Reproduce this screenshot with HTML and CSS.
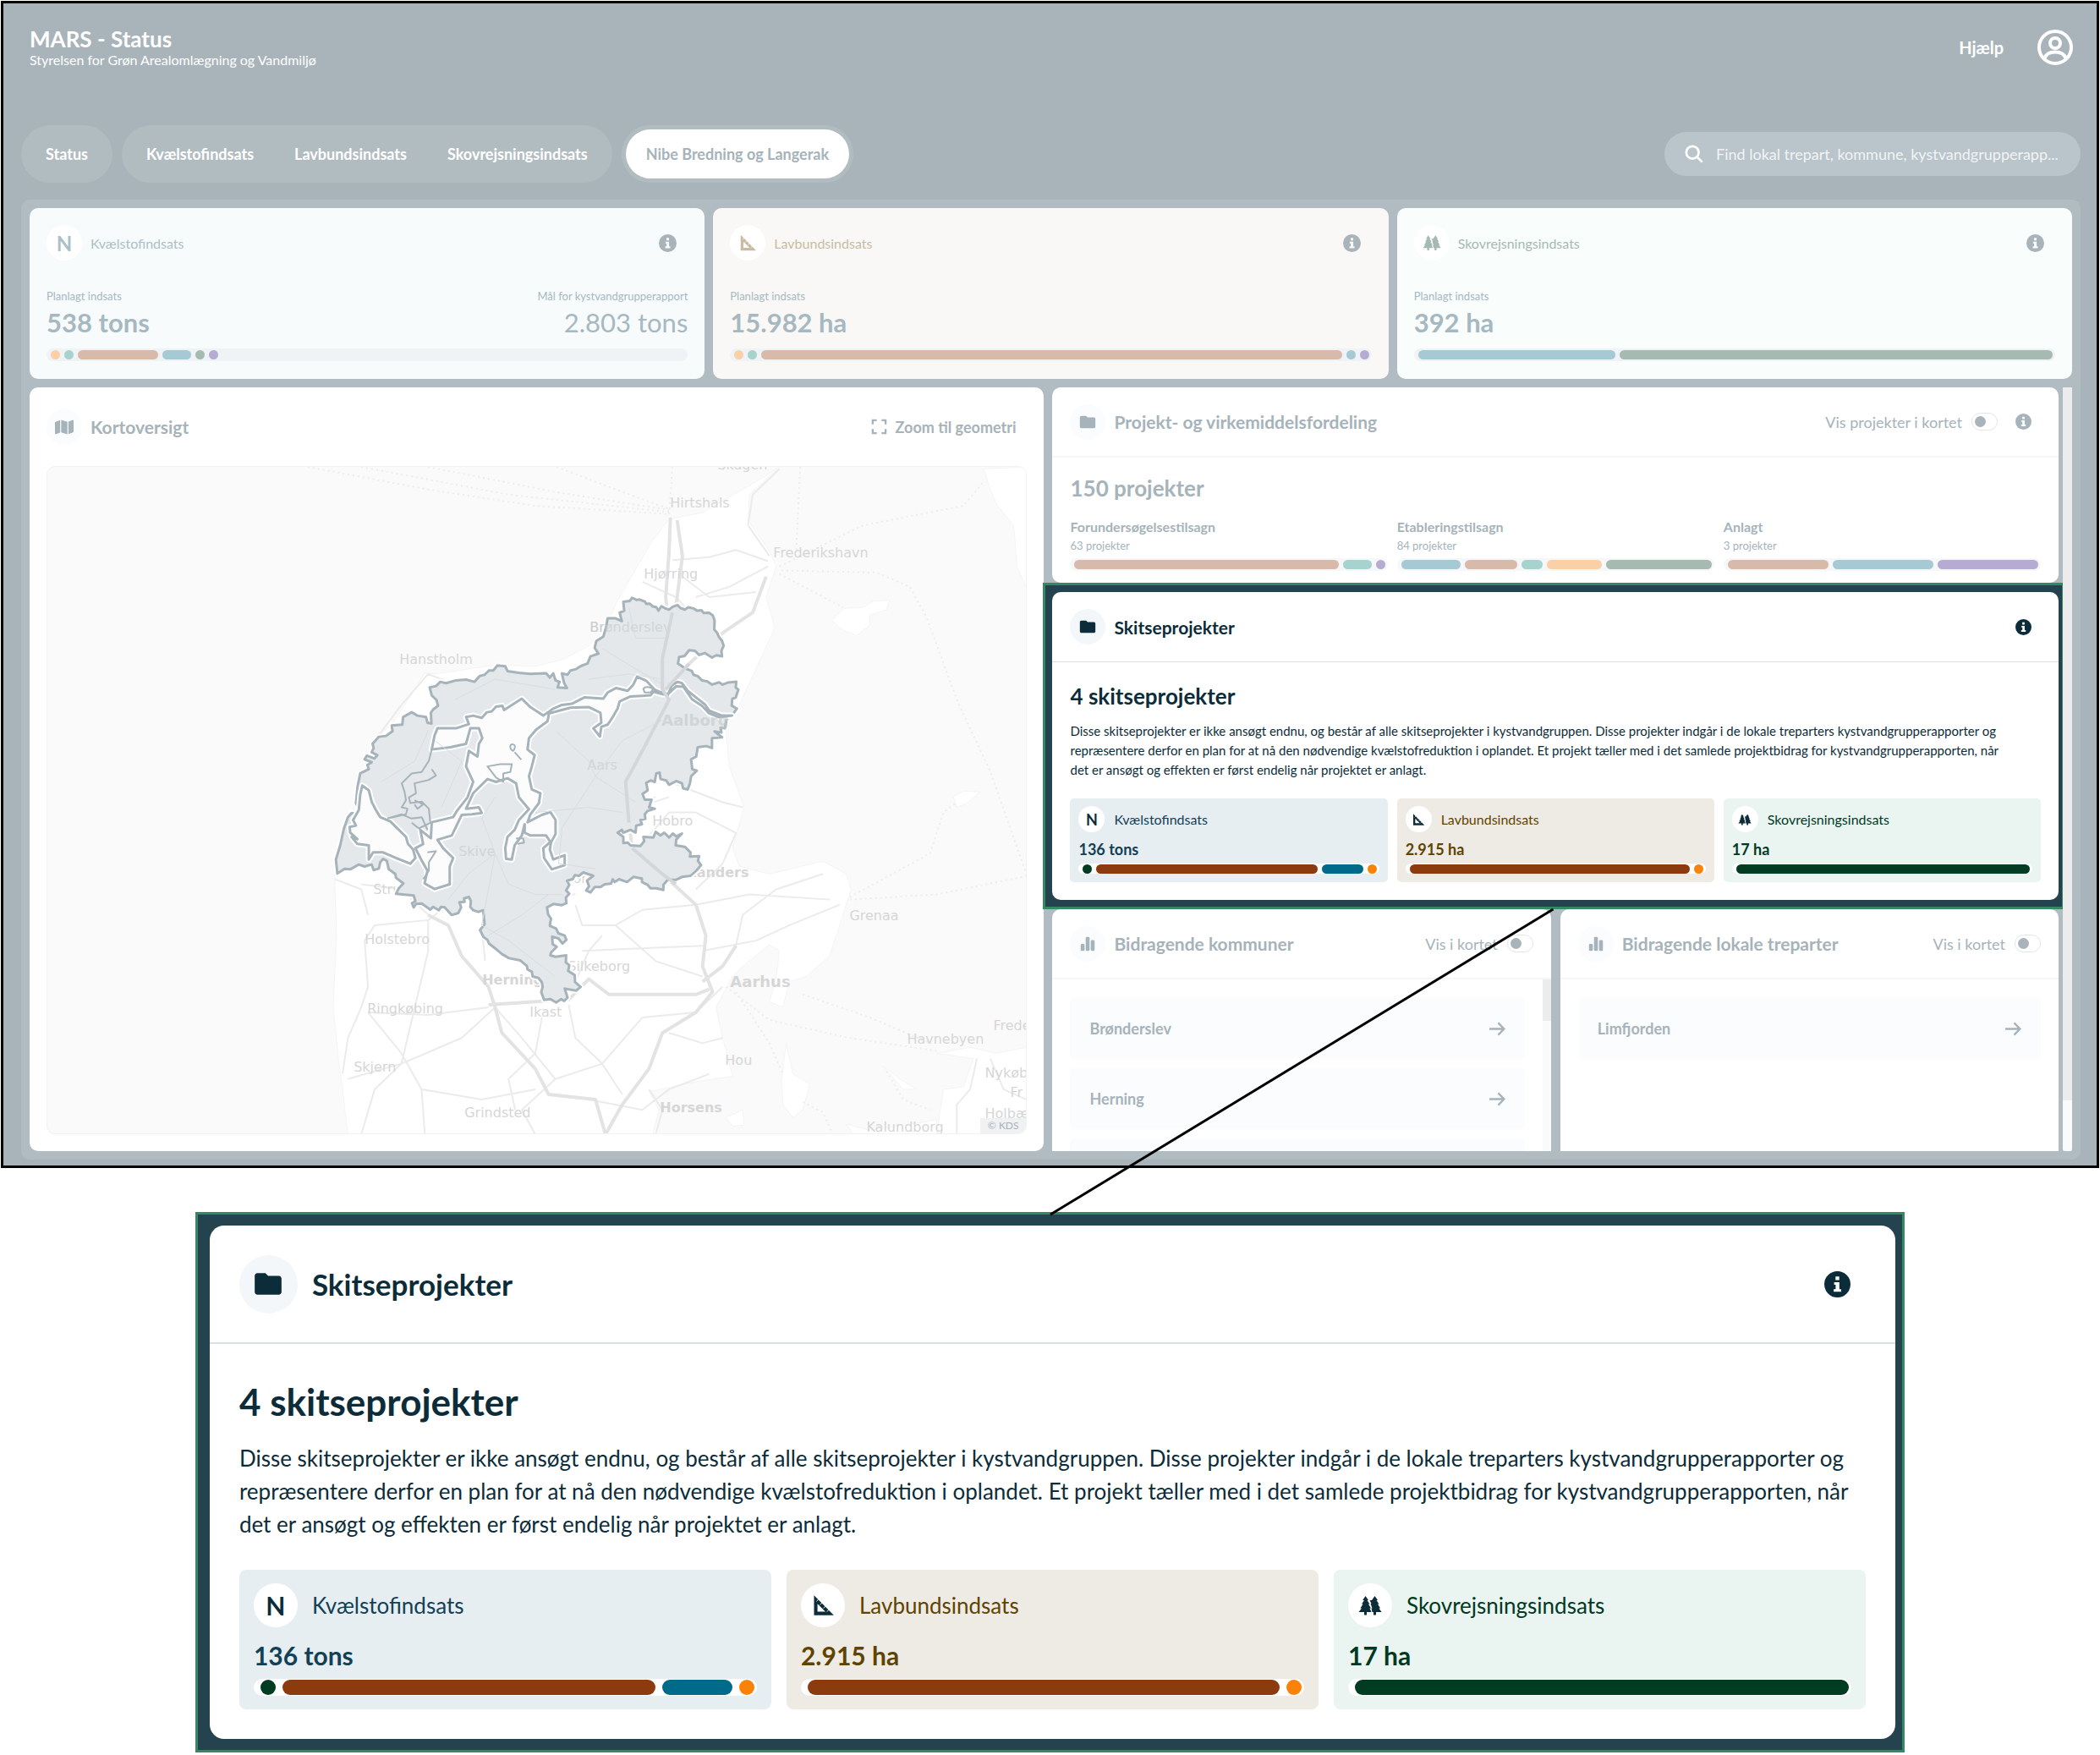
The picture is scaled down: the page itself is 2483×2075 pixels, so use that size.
FILE: index.html
```html
<!DOCTYPE html>
<html lang="da">
<head>
  <meta charset="UTF-8" />
  <meta name="viewport" content="width=device-width, initial-scale=1.0" />
  <title>MARS - Status</title>
  <link rel="stylesheet" href="styles.css">
</head>
<body>
  <!-- Icons -->
  <svg class="sprite" aria-hidden="true">
    <symbol id="i-info" viewBox="0 0 24 24"><path fill-rule="evenodd" d="M12 0a12 12 0 1 0 0 24 12 12 0 0 0 0-24zM10.3 4.8h3.4v3.4h-3.4zM9 10h4.8v6.4H15.4v2.4H8.6v-2.4h1.8v-4H9z"/></symbol>
    <symbol id="i-folder" viewBox="0 0 24 24"><path d="M10 4H4c-1.1 0-2 .9-2 2v12c0 1.1.9 2 2 2h16c1.100 0 2-.9 2-2V8c0-1.100-.9-2-2-2h-8l-2-2z"/></symbol>
    <symbol id="i-map" viewBox="0 0 576 512"><path d="M384 476L192 421V36l192 55zM416 475V88l127-51c16-6 33 5 33 22v336c0 10-6 18-15 22zM15 95l145-58v387L33 475c-16 6-33-6-33-23V117c0-10 6-18 15-22z"/></symbol>
    <symbol id="i-bars" viewBox="0 0 24 24"><rect x="3" y="12" width="5" height="9" rx="1.500"/><rect x="9.500" y="3" width="5" height="18" rx="1.500"/><rect x="16" y="7" width="5" height="14" rx="1.500"/></symbol>
    <symbol id="i-square" viewBox="0 0 24 24"><path fill-rule="evenodd" d="M3 2v20h20zM6.500 10.500l8 8h-8z"/><path fill="none" stroke="#fff" stroke-width=".8" d="M5.500 8l2-2M9 11.500l2-2M12.500 15l2-2M16 18.500l2-2"/></symbol>
    <symbol id="i-trees" viewBox="0 0 28 24"><path d="M8.500 1L12 6h-1.500l3 4.500H12l3 5h-1.500L15.500 20H10v3.500H7V20H.5L4 15.500H2.500l3-5H4L7 6H5.200z"/><path d="M19.500 1L23 6h-1.500l3 4.500H23l3 5h-1.500L27.500 20H21v3.500h-3V20h-1.500l-1-4.500h1L14.500 10h1L13.500 6H16z"/></symbol>
    <symbol id="i-user" viewBox="0 0 42 42"><g fill="none" stroke="currentColor" stroke-width="4"><circle cx="21" cy="21" r="19"/><circle cx="21" cy="16" r="6"/><path d="M8.500 34c1.500-5 6-7.500 12.500-7.500S32 29 33.500 34"/></g></symbol>
    <symbol id="i-search" viewBox="0 0 24 24"><g fill="none" stroke="currentColor" stroke-width="3"><circle cx="10" cy="10" r="8"/><path d="M15.500 15.500l7 7"/></g></symbol>
    <symbol id="i-arrow" viewBox="0 0 20 18"><path fill="none" stroke="currentColor" stroke-width="2.500" d="M0 9h18M11 1.500L18.300 9 11 16.500"/></symbol>
    <symbol id="i-expand" viewBox="0 0 20 20"><path fill="none" stroke="currentColor" stroke-width="2.500" d="M2 7V2h5M13 2h5v5M18 13v5h-5M7 18H2v-5"/></symbol>
  </svg>

  <div class="app">
    <header class="topbar">
      <div>
        <h1>MARS - Status</h1>
        <p>Styrelsen for Grøn Arealomlægning og Vandmiljø</p>
      </div>
      <div class="topbar-right">
        <a href="#" class="help">Hjælp</a>
        <button class="user" aria-label="Bruger"><svg><use href="#i-user"/></svg></button>
      </div>
    </header>

    <nav class="tabs">
      <div class="pill"><a href="#">Status</a></div>
      <div class="pill"><a href="#">Kvælstofindsats</a><a href="#">Lavbundsindsats</a><a href="#">Skovrejsningsindsats</a></div>
      <div class="pill"><a href="#" class="active">Nibe Bredning og Langerak</a></div>
      <label class="search">
        <svg><use href="#i-search"/></svg>
        <input type="text" aria-label="Søg" placeholder="Find lokal trepart, kommune, kystvandgrupperapp...">
      </label>
    </nav>

    <main class="dashboard">
      <!-- Key figures -->
      <div class="stats">
        <section class="stat kv">
          <div class="stat-head"><span class="circle">N</span><h2>Kvælstofindsats</h2><button class="info" aria-label="Info"><svg><use href="#i-info"/></svg></button></div>
          <div class="stat-values">
            <div><p>Planlagt indsats</p><strong>538 tons</strong></div>
            <div class="goal"><p>Mål for kystvandgrupperapport</p><span>2.803 tons</span></div>
          </div>
          <div class="track"><i class="dot orange"></i><i class="dot teal"></i><i class="brown" style="width:12.7%"></i><i class="blue" style="width:4.5%"></i><i class="dot green"></i><i class="dot purple"></i></div>
        </section>
        <section class="stat lav">
          <div class="stat-head"><span class="circle"><svg><use href="#i-square"/></svg></span><h2>Lavbundsindsats</h2><button class="info" aria-label="Info"><svg><use href="#i-info"/></svg></button></div>
          <div class="stat-values">
            <div><p>Planlagt indsats</p><strong>15.982 ha</strong></div>
          </div>
          <div class="track"><i class="dot orange"></i><i class="dot teal"></i><i class="brown" style="flex-grow:1"></i><i class="dot blue"></i><i class="dot purple"></i></div>
        </section>
        <section class="stat skov">
          <div class="stat-head"><span class="circle"><svg><use href="#i-trees"/></svg></span><h2>Skovrejsningsindsats</h2><button class="info" aria-label="Info"><svg><use href="#i-info"/></svg></button></div>
          <div class="stat-values">
            <div><p>Planlagt indsats</p><strong>392 ha</strong></div>
          </div>
          <div class="track"><i class="blue" style="flex-grow:233"></i><i class="green" style="flex-grow:511"></i></div>
        </section>
      </div>

      <div class="columns">
        <!-- Map -->
        <section class="map-card">
          <div class="map-head">
            <span class="circle"><svg><use href="#i-map"/></svg></span>
            <h2>Kortoversigt</h2>
            <button class="zoom"><svg><use href="#i-expand"/></svg>Zoom til geometri</button>
          </div>
          <div class="map">
            <svg viewBox="56 551 1157 791" preserveAspectRatio="xMidYMid slice" role="img" aria-label="Kort over Nordjylland">
              <g class="land" transform="translate(0 440) scale(.7908 .6059)">
                <path d="M1165 186L1130 215 1090 245 1050 275 1000 288 975 330 955 375 935 420 920 455 905 500 880 535 840 562 800 575 745 572 700 580 650 590 635 588 620 620 590 680 560 720 545 780 530 850 505 950 500 980 503 1100 498 1240 505 1330 512 1400 520 1490 975 1490 985 1440 970 1405 1040 1385 1095 1375 1080 1300 1070 1240 1095 1180 1110 1160 1150 1118 1165 1130 1160 1180 1150 1230 1170 1240 1180 1190 1205 1180 1240 1140 1255 1080 1272 1010 1265 980 1230 955 1150 980 1105 965 1095 930 1112 850 1090 770 1085 700 1105 650 1130 580 1158 500 1145 440 1160 380 1150 350 1118 290 1120 240z"/>
                <path d="M1243 485L1262 462 1290 460 1305 448 1330 446 1325 465 1300 475 1300 495 1280 515 1260 505zM1425 830L1440 818 1465 820 1445 842 1430 850zM1168 1385L1175 1310 1185 1370 1210 1390 1200 1440 1185 1455 1170 1430zM1320 1355L1345 1380 1370 1400 1350 1400zM1400 1488L1410 1400 1440 1395 1455 1340 1400 1330 1450 1318 1490 1330 1534 1318 1534 1488zM1265 1468L1300 1480 1400 1460 1400 1488 1275 1488zM1470 190L1534 186 1534 420 1520 380 1515 300 1490 260 1480 230zM1085 1455L1110 1440 1112 1470 1095 1472z"/>
              </g>
              <g class="ferries" transform="translate(0 440) scale(.7908 .6059)">
                <path d="M460 186L640 230 800 262 1000 278M540 186L760 240 1000 274M640 186L830 235 1000 270M832 186L920 230 1000 268M1005 186L1000 280M1196 186L1190 350M1165 380L1290 300 1440 262 1470 215M1168 388L1310 392 1360 420 1385 480 1430 640 1480 780 1534 980M1165 395L1260 460M1270 1030L1400 1020 1534 984M1270 1025L1390 940 1410 860 1430 840M1085 1200L1150 1265 1270 1300 1400 1325M1200 1215L1300 1260 1390 1310M1100 1210L1150 1310 1170 1370M1200 1425L1230 1445 1245 1488M1325 1365L1350 1420 1390 1440"/>
              </g>
              <g class="roads" transform="translate(0 440) scale(.7908 .6059)">
                <path d="M1165 190L1125 240 1118 300 1150 360M1005 368L1060 362 1100 348 1148 370M1148 380L1090 420 1040 440M1020 400L1060 440 1130 430M960 410L1010 440 1060 510M880 600L940 590 990 600M640 590L680 610 740 600 830 620M640 590L600 650 560 720M570 720L620 740 640 700 700 650 760 600M545 790L600 840 640 820M560 760L590 850 580 870M900 540L950 580 990 610M940 460L950 520 1000 520M830 700L880 760 890 790 840 890 835 960M890 790L950 840 980 830M890 790L930 720 990 680M860 690L900 690 960 740M800 860L880 850 930 860 1000 830M700 930L740 940 770 920M740 940L700 980 670 1040M740 940L760 1000 800 1020 860 1020M740 940L720 1080 725 1150M740 940L720 870 690 830M670 1040L640 1070 560 1080 545 1110 550 1200 540 1240M640 1060L600 1010 540 1000M500 990L540 1010 550 1060M550 1250L600 1330 630 1400 635 1488M550 1250L640 1255 730 1240M600 1350L690 1300 740 1240M600 1350L520 1380M600 1350L560 1400 540 1488M630 1400L720 1420 800 1400M640 1070L640 1130 620 1240 600 1350M740 1240L780 1300 830 1380 900 1350 960 1260M830 1380L780 1440 800 1488M850 1235L860 1300 900 1350 930 1410M860 1040L870 1080 920 1080 960 1050 1040 1040M920 1080L980 1150 1050 1180M870 1130L1050 1120M860 1190L880 1130 900 1100M1040 1040L1120 1020 1240 1030M1050 1130L1130 1110 1180 1080 1255 1040M1100 1120L1110 1060 1160 1010 1230 980M1000 800L1080 840 1110 850M1040 860L1100 900 1080 960 1040 1010M960 920L1000 860 1040 860M960 1260L1040 1250 1080 1200M880 1420L960 1440 1000 1400 1060 1370M970 1400L990 1440 980 1488M1460 1340L1450 1400 1430 1430 1430 1488M1480 1340L1500 1400 1534 1420M760 1100L790 1150 830 1180M730 1100L780 1060 820 1020M810 1260L800 1330 760 1380 770 1440M1000 1290L1050 1310 1080 1300M540 1240L520 1300 512 1370"/>
                <path class="major" d="M1002 285L1000 350 995 440 1000 520 990 620 1000 640 960 740 935 800 940 880 945 930 990 980 1040 1040 1055 1100 1050 1160 1065 1210 1040 1250 990 1290 970 1360 930 1430 905 1488M1012 290L1020 360 1010 460 990 600M1145 400L1125 470 1080 510 1030 570 995 620M640 1060L670 1080 690 1140 730 1200 740 1240 750 1290 800 1360 820 1410 890 1420 905 1488M730 1235L850 1225 880 1185 910 1215 1040 1215 1060 1205M1100 1120L1080 1160 1050 1190"/>
              </g>
              <g class="places">
                <text x="792" y="601">Hirtshals</text>
                <text x="848" y="556">Skagen</text>
                <text x="914" y="660">Frederikshavn</text>
                <text x="761" y="685">Hjørring</text>
                <text x="697" y="748">Brønderslev</text>
                <text x="472" y="786">Hanstholm</text>
                <text x="527" y="849">Thisted</text>
                <text x="782" y="859" class="city">Aalborg</text>
                <text x="540" y="913">Nykøbing M</text>
                <text x="694" y="911">Aars</text>
                <text x="771" y="976">Hobro</text>
                <text x="542" y="1012">Skive</text>
                <text x="652" y="1044">Viborg</text>
                <text x="811" y="1037" class="town">Randers</text>
                <text x="441" y="1057">Struer</text>
                <text x="1004" y="1088">Grenaa</text>
                <text x="431" y="1116">Holstebro</text>
                <text x="671" y="1148">Silkeborg</text>
                <text x="570" y="1164" class="town">Herning</text>
                <text x="863" y="1167" class="city">Aarhus</text>
                <text x="434" y="1198">Ringkøbing</text>
                <text x="626" y="1202">Ikast</text>
                <text x="1174" y="1218">Frederiksværk</text>
                <text x="1072" y="1234">Havnebyen</text>
                <text x="857" y="1259">Hou</text>
                <text x="418" y="1267">Skjern</text>
                <text x="1164" y="1274">Nykøbing</text>
                <text x="1194" y="1297">Fr</text>
                <text x="1164" y="1322">Holbæk</text>
                <text x="780" y="1315" class="town">Horsens</text>
                <text x="549" y="1321">Grindsted</text>
                <text x="1024" y="1338">Kalundborg</text>
              </g>
              <defs>
                <path id="area" d="M1116 82L1132 90 1140 88 1160 95 1166 104 1178 103 1188 113 1200 115 1208 128 1218 112 1232 120 1245 124 1258 114 1275 108 1284 118 1300 124 1312 116 1330 120 1344 128 1358 126 1366 136 1385 135 1398 145 1404 162 1403 195 1412 205 1420 222 1430 235 1436 252 1428 270 1430 290 1410 286 1395 294 1370 278 1350 285 1335 270 1315 268 1300 288 1280 292 1276 315 1300 332 1325 342 1330 355 1345 360 1360 375 1378 378 1395 390 1420 382 1432 390 1450 383 1480 380 1478 400 1487 408 1478 436 1466 440 1464 465 1482 475 1465 500 1446 512 1440 545 1425 543 1428 560 1404 556 1430 577 1395 580 1395 615 1375 608 1345 612 1340 645 1322 655 1326 690 1342 695 1322 715 1318 740 1310 762 1294 758 1290 740 1270 732 1245 745 1235 730 1215 725 1212 702 1200 705 1195 735 1180 730 1165 738 1170 765 1152 778 1160 798 1184 798 1175 825 1195 830 1170 838 1160 850 1162 866 1145 870 1150 885 1130 890 1128 915 1110 905 1085 915 1080 905 1065 915 1085 930 1085 952 1100 950 1110 960 1145 962 1158 945 1155 930 1190 932 1198 912 1215 925 1228 915 1245 932 1258 918 1270 928 1290 918 1270 940 1268 960 1300 965 1320 985 1318 1000 1350 998 1346 1015 1357 1030 1340 1050 1320 1068 1290 1072 1270 1082 1240 1082 1225 1100 1225 1118 1200 1112 1180 1112 1170 1100 1150 1090 1150 1078 1120 1072 1098 1090 1070 1080 1055 1090 1048 1080 1042 1096 1020 1098 1005 1108 985 1108 970 1127 955 1120 965 1105 958 1085 980 1068 945 1056 930 1068 915 1066 908 1080 888 1085 896 1100 885 1120 896 1132 884 1145 886 1165 870 1172 840 1168 818 1180 822 1205 832 1220 828 1245 850 1255 858 1272 880 1280 886 1295 872 1308 858 1290 836 1284 838 1310 852 1320 832 1340 830 1350 848 1355 885 1350 884 1375 896 1385 892 1405 915 1420 916 1445 936 1462 920 1475 880 1468 890 1500 878 1512 868 1505 850 1517 830 1505 808 1508 798 1480 803 1462 800 1445 788 1430 768 1425 765 1408 750 1400 748 1388 725 1368 685 1360 660 1345 645 1332 615 1308 610 1295 596 1285 584 1260 600 1240 595 1190 578 1196 560 1190 550 1178 552 1158 545 1143 528 1148 530 1160 512 1162 518 1180 508 1200 485 1207 460 1180 448 1178 440 1190 420 1178 410 1188 380 1166 360 1168 352 1180 346 1165 358 1158 352 1138 320 1135 290 1132 300 1112 316 1095 290 1075 288 1062 265 1045 258 1015 245 1008 235 1020 230 1042 212 1048 205 1028 180 1035 160 1028 130 1045 110 1043 100 1050 85 1060 80 1010 95 960 108 900 122 860 135 845 158 850 165 840 150 810 156 750 165 705 195 690 190 675 205 665 180 655 188 642 215 652 225 640 205 630 212 615 208 600 230 575 255 572 278 555 275 535 312 532 315 505 345 488 365 500 395 505 400 525 414 528 412 490 420 478 437 465 432 445 415 428 408 400 430 395 445 380 465 385 500 375 535 372 565 380 582 360 600 355 615 340 630 340 645 322 672 325 680 342 720 348 760 352 815 350 828 365 840 350 848 375 862 380 855 400 888 402 878 385 870 350 890 355 900 340 920 335 935 325 960 315 970 290 998 280 985 260 990 236 1015 220 1025 185 1030 155 1058 155 1080 165 1072 135 1088 128 1085 96 1108 93z"/>
                <path id="water" d="M172 748L195 765 205 805 220 835 235 860 270 875 300 905 325 930 332 955 350 975 358 1005 340 1025 290 1005 245 985 210 985 195 1010 195 960 155 955 135 930 155 938 130 915 128 895 150 890 140 870 160 835 165 780zM590 508L608 488 625 485 640 468 662 465 668 480 730 440 760 470 805 500 840 475 870 462 905 458 950 435 1015 440 1030 418 1060 402 1100 412 1120 390 1133 362 1165 376 1195 408 1240 428 1255 392 1275 380 1290 385 1310 412 1345 440 1370 460 1385 482 1430 500 1465 500 1420 506 1385 492 1360 465 1325 442 1295 398 1270 396 1245 420 1225 425 1190 415 1180 428 1110 432 1072 450 1065 475 1045 510 1030 532 1008 540 1003 574 980 545 1008 525 1005 490 965 470 900 472 825 492 820 520 780 550 755 580 750 620 775 640 765 680 755 715 765 762 795 775 790 810 760 850 750 878 800 852 830 842 848 870 848 920 832 950 828 975 840 1010 880 995 880 1030 835 1045 808 1005 805 970 830 948 815 925 760 925 740 915 740 885 730 925 705 960 695 1010 675 1008 672 970 680 930 705 905 720 870 755 832 720 790 710 740 680 722 640 735 610 725 560 775 535 830 580 825 590 845 555 850 520 852 485 925 435 940 455 970 490 1005 478 1035 478 1098 425 1115 390 1095 400 1050 378 1010 358 970 385 955 375 905 412 935 415 878 490 860 505 835 540 790 560 735 535 680 545 625 575 645 580 600 592 580 580 545 550 545 535 600 480 612 415 620 425 570 435 545 500 545 545 530 535 505 560 500z"/>
              </defs>
              <g transform="translate(370 680) scale(.338 .3333)">
                <use href="#area" class="halo"/>
                <use href="#area" class="area"/>
                <use href="#water" class="halo"/>
                <use href="#water" class="water"/>
                <path class="outline" d="M415 620L405 660 380 700 345 705 310 740 320 770 325 800 310 825 330 830 325 850 260 865M415 690L430 712 405 728 355 740 360 775 335 790 340 810 380 805 405 830 410 880 370 900 345 880M260 865L310 850 345 865 380 860 400 905M610 680L655 672 695 672 690 700 665 705 665 735 640 720zM690 605Q698 598 705 605Q708 618 700 625Q688 620 690 605M705 630L728 656M1155 405Q1165 392 1190 405L1180 418 1160 418zM400 985L430 980 405 1020 405 1050 385 1080M355 800L385 815 365 830 355 815M710 935L735 935 738 950 715 955"/>
              </g>
              <g class="places inner" opacity=".6">
                <text x="542" y="1012">Skive</text>
                <text x="694" y="911">Aars</text>
                <text x="697" y="748">Brønderslev</text>
                <text x="782" y="859" class="city">Aalborg</text>
              </g>
              <g class="roads inner" transform="translate(0 440) scale(.7908 .6059)">
                <path d="M940 460L950 520 1000 520M900 540L950 580 990 610M880 600L940 590 990 600M680 640L740 600 830 620M640 700L620 760 570 800M890 790L840 890 835 960 890 970M890 790L930 720 990 680M830 700L880 760 890 790 950 840M800 860L880 850 930 860M740 940L700 980 670 1030M740 940L760 1000 800 1020 840 1020M740 940L720 1080 760 1110 830 1180M740 940L720 870 740 830M730 1100L780 1060 820 1020M650 720L690 760 660 850"/>
                <path class="major" d="M1005 470L990 560 990 620 1000 640 960 740 935 800 940 880M945 930L990 980 1010 1000M1030 570L995 620"/>
              </g>
            </svg>
            <span class="credit">© KDS</span>
          </div>
        </section>

        <div class="side">
          <div class="side-content">
            <section class="card muted">
              <div class="card-head">
                <span class="circle"><svg><use href="#i-folder"/></svg></span>
                <h2>Projekt- og virkemiddelsfordeling</h2>
                <label class="toggle">Vis projekter i kortet<input type="checkbox"></label>
                <button class="info" aria-label="Info"><svg><use href="#i-info"/></svg></button>
              </div>
              <div class="projects">
                <h3>150 projekter</h3>
                <div class="phases">
                  <div><h4>Forundersøgelsestilsagn</h4><p>63 projekter</p>
                    <div class="track"><i class="brown" style="flex-grow:313"></i><i class="teal" style="flex-grow:34"></i><i class="dot purple"></i></div></div>
                  <div><h4>Etableringstilsagn</h4><p>84 projekter</p>
                    <div class="track"><i class="blue" style="flex-grow:71"></i><i class="brown" style="flex-grow:62"></i><i class="teal" style="flex-grow:25"></i><i class="orange" style="flex-grow:66"></i><i class="green" style="flex-grow:125"></i></div></div>
                  <div><h4>Anlagt</h4><p>3 projekter</p>
                    <div class="track"><i class="brown" style="flex-grow:1"></i><i class="blue" style="flex-grow:1"></i><i class="purple" style="flex-grow:1"></i></div></div>
                </div>
              </div>
            </section>

            <div class="highlight">
              <section class="card sketch">
                <div class="card-head">
                  <span class="circle"><svg><use href="#i-folder"/></svg></span>
                  <h2>Skitseprojekter</h2>
                  <button class="info" aria-label="Info"><svg><use href="#i-info"/></svg></button>
                </div>
                <div class="sketch-body">
                  <h3>4 skitseprojekter</h3>
                  <p>Disse skitseprojekter er ikke ansøgt endnu, og består af alle skitseprojekter i kystvandgruppen. Disse projekter indgår i de lokale treparters kystvandgrupperapporter og<br>repræsentere derfor en plan for at nå den nødvendige kvælstofreduktion i oplandet. Et projekt tæller med i det samlede projektbidrag for kystvandgrupperapporten, når<br>det er ansøgt og effekten er først endelig når projektet er anlagt.</p>
                  <div class="tiles">
                    <div class="tile kv"><div class="tile-head"><span class="circle">N</span>Kvælstofindsats</div><strong>136 tons</strong>
                      <div class="track"><i class="dot green"></i><i class="brown" style="flex-grow:262"></i><i class="blue" style="flex-grow:49"></i><i class="dot orange"></i></div></div>
                    <div class="tile lav"><div class="tile-head"><span class="circle"><svg><use href="#i-square"/></svg></span>Lavbundsindsats</div><strong>2.915 ha</strong>
                      <div class="track"><i class="brown" style="flex-grow:1"></i><i class="dot orange"></i></div></div>
                    <div class="tile skov"><div class="tile-head"><span class="circle"><svg><use href="#i-trees"/></svg></span>Skovrejsningsindsats</div><strong>17 ha</strong>
                      <div class="track"><i class="green" style="flex-grow:1"></i></div></div>
                  </div>
                </div>
              </section>
            </div>

            <div class="lists">
              <section class="card muted">
                <div class="card-head">
                  <span class="circle"><svg><use href="#i-bars"/></svg></span>
                  <h2>Bidragende kommuner</h2>
                  <label class="toggle">Vis i kortet<input type="checkbox"></label>
                </div>
                <div class="list-body">
                  <div class="list">
                    <a href="#">Brønderslev<svg><use href="#i-arrow"/></svg></a>
                    <a href="#">Herning<svg><use href="#i-arrow"/></svg></a>
                    <a href="#" aria-label="Næste kommune"></a>
                  </div>
                  <div class="scrollbar"><div class="thumb" style="height:24%"></div></div>
                </div>
              </section>
              <section class="card muted">
                <div class="card-head">
                  <span class="circle"><svg><use href="#i-bars"/></svg></span>
                  <h2>Bidragende lokale treparter</h2>
                  <label class="toggle">Vis i kortet<input type="checkbox"></label>
                </div>
                <div class="list-body">
                  <div class="list">
                    <a href="#">Limfjorden<svg><use href="#i-arrow"/></svg></a>
                  </div>
                </div>
              </section>
            </div>
          </div>
          <div class="scrollbar"><div class="thumb" style="height:93.4%"></div></div>
        </div>
      </div>
    </main>
  </div>

  <!-- Enlarged card -->
  <div class="callout">
    <svg class="leader" viewBox="0 0 100 100" preserveAspectRatio="none" aria-hidden="true"><path d="M100 0L0 100"/></svg>
    <section class="card sketch large">
      <div class="card-head">
        <span class="circle"><svg><use href="#i-folder"/></svg></span>
        <h2>Skitseprojekter</h2>
        <button class="info" aria-label="Info"><svg><use href="#i-info"/></svg></button>
      </div>
      <div class="sketch-body">
        <h3>4 skitseprojekter</h3>
        <p>Disse skitseprojekter er ikke ansøgt endnu, og består af alle skitseprojekter i kystvandgruppen. Disse projekter indgår i de lokale treparters kystvandgrupperapporter og<br>repræsentere derfor en plan for at nå den nødvendige kvælstofreduktion i oplandet. Et projekt tæller med i det samlede projektbidrag for kystvandgrupperapporten, når<br>det er ansøgt og effekten er først endelig når projektet er anlagt.</p>
        <div class="tiles">
          <div class="tile kv"><div class="tile-head"><span class="circle">N</span>Kvælstofindsats</div><strong>136 tons</strong>
            <div class="track"><i class="dot green"></i><i class="brown" style="flex-grow:439"></i><i class="blue" style="flex-grow:82"></i><i class="dot orange"></i></div></div>
          <div class="tile lav"><div class="tile-head"><span class="circle"><svg><use href="#i-square"/></svg></span>Lavbundsindsats</div><strong>2.915 ha</strong>
            <div class="track"><i class="brown" style="flex-grow:1"></i><i class="dot orange"></i></div></div>
          <div class="tile skov"><div class="tile-head"><span class="circle"><svg><use href="#i-trees"/></svg></span>Skovrejsningsindsats</div><strong>17 ha</strong>
            <div class="track"><i class="green" style="flex-grow:1"></i></div></div>
        </div>
      </div>
    </section>
  </div>
</body>
</html>
```
FILE: styles.css
```css
* { box-sizing: border-box; }
body { margin: 0; background: #fff; font-family: Lato, sans-serif; color: #a6b3ba; font-size: 16px; }
h1, h2, h3, h4, p { margin: 0; }
a { color: inherit; text-decoration: none; }
button { border: 0; padding: 0; background: none; color: inherit; font: inherit; cursor: pointer; }
svg { display: block; fill: currentColor; }
.sprite { position: absolute; width: 0; height: 0; }

.app { margin: 1px; border: 3px solid #000; background: #a9b4ba; padding: 0 19px 7px 21px; }

/* Header */
.topbar { display: flex; justify-content: space-between; align-items: flex-start; height: 144px; padding: 27px 9px 0 10px; color: #fff; }
.topbar h1 { font-size: 26px; line-height: 30px; }
.topbar p { line-height: 20px; }
.topbar-right { display: flex; align-items: center; gap: 40px; margin-top: 4px; }
.help { font-size: 20px; font-weight: bold; }
.user svg { width: 42px; height: 42px; }

.tabs { display: flex; gap: 11px; align-items: center; margin-bottom: 20px; font-size: 18px; font-weight: bold; color: #fff; }
.pill { display: flex; height: 68px; padding: 5px; border-radius: 34px; background: #b1bcc1; }
.pill a { display: flex; align-items: center; padding: 0 24px; border-radius: 29px; }
.pill a.active { background: #fff; color: #a6b3ba; }
.search { display: flex; align-items: center; gap: 15px; width: 492px; height: 52px; margin-left: auto; padding: 0 24px; border-radius: 26px; background: #bac4cb; }
.search svg { width: 22px; height: 22px; flex: none; }
.search input { flex: 1; min-width: 0; border: 0; padding: 0; background: none; font: 18px Lato, sans-serif; color: #fff; }
.search input::placeholder { color: #f1f4f5; }

.dashboard { padding: 10px; border-radius: 10px; background: #b0bcc1; }

/* Shared parts */
.circle { display: flex; align-items: center; justify-content: center; flex: none; width: 42px; height: 42px; border-radius: 50%; background: #fafcfe; }
.circle svg { width: 22px; height: 22px; }
.info svg { width: 19px; height: 19px; }
.track { display: flex; align-items: center; gap: 5px; height: 15px; padding: 0 3px 0 5px; border-radius: 8px; background: #f6f7f9; }
.track i { height: 11px; border-radius: 6px; flex-basis: 0; }
.track i[style*="width"] { flex-basis: auto; }
.track .dot { flex: none; width: 11px; }
.orange { background: #fcd0a6; }
.teal { background: #a6d3ce; }
.brown { background: #d7baaa; }
.blue { background: #a5c9d5; }
.green { background: #a5bab0; }
.purple { background: #b5abd3; }

/* Key figures */
.stats { display: grid; grid-template-columns: repeat(3, 1fr); gap: 10px; margin-bottom: 10px; }
.stat { padding: 20px 20px 21px; border-radius: 10px; }
.stat.kv { background: #f7fbfc; color: #abbfc8; }
.stat.lav { background: #faf8f6; color: #c7bca2; }
.stat.skov { background: #f9fdfc; color: #a5bab0; }
.stat .circle { background: #fff; font-size: 24px; font-weight: bold; }
.stat-head { display: flex; align-items: center; gap: 10px; }
.stat h2 { font-size: 16px; font-weight: normal; }
.stat .info { margin: 0 13px 0 auto; color: #a9b4ba; }
.stat .info svg { width: 21px; height: 21px; }
.stat-values { display: flex; justify-content: space-between; margin: 34px 0 13px; color: #a6b8c1; }
.stat-values p { font-size: 13px; line-height: 16px; margin-bottom: 5px; }
.stat-values strong, .stat-values span { display: block; font-size: 31px; line-height: 36px; }
.goal { text-align: right; }
.stat .track { background: #f0f3f5; }

.columns { display: grid; grid-template-columns: 1199fr 1205fr; gap: 10px; }

/* Map */
.map-card { display: flex; flex-direction: column; padding: 20px; border-radius: 10px; background: #fff; }
.map-head { display: flex; align-items: center; gap: 10px; height: 53px; margin-bottom: 20px; }
.map-head h2 { font-size: 21px; }
.zoom { display: flex; align-items: center; gap: 10px; margin-left: auto; padding-right: 13px; font-size: 18px; font-weight: bold; }
.zoom svg { width: 19px; height: 19px; }
.map { position: relative; flex: 1; border-radius: 10px; overflow: hidden; background: #fafafa; border: 1px solid #f2f2f2; }
.map > svg { position: absolute; inset: 0; width: 100%; height: 100%; }
.map path, .map use { vector-effect: non-scaling-stroke; }
.land { fill: #fff; stroke: #f4f4f4; }
.ferries { fill: none; stroke: #ececec; stroke-width: 2; stroke-dasharray: 2 4; }
.roads { fill: none; stroke: #ebebeb; stroke-width: 2; stroke-linejoin: round; }
.roads .major { stroke: #e3e3e3; stroke-width: 4; }
.roads.inner { stroke: #d9dddf; stroke-width: 1; }
.roads.inner .major { stroke: #d3d7d9; }
.places { font: 16px "DejaVu Sans", sans-serif; fill: #d6d6d6; }
.places .town { font-weight: bold; }
.places .city { font-size: 18px; font-weight: bold; }
.places.inner { fill: #c3c8ca; }
.halo { fill: none; stroke: #fff; stroke-width: 7; stroke-linejoin: round; }
.area { fill: #e4e8ea; stroke: #a6b3ba; stroke-width: 3; stroke-linejoin: round; }
.water { fill: #fcfcfc; stroke: #a6b3ba; stroke-width: 3; stroke-linejoin: round; }
.outline { fill: none; stroke: #a6b3ba; stroke-width: 2; stroke-linejoin: round; }
.credit { position: absolute; right: 0; bottom: 0; padding: 0 9px; background: #f0f1f2; font-size: 12px; line-height: 18px; }

/* Right side */
.side { display: flex; gap: 5px; }
.side-content { flex: 1; min-width: 0; }
.scrollbar { flex: none; width: 11px; background: #fafafa; border-radius: 2px; }
.thumb { background: #ececec; }

.card { border-radius: 10px; background: #fff; }
.card-head { display: flex; align-items: center; gap: 10px; height: 83px; padding: 0 21px; border-bottom: 2px solid #f4f6f7; }
.card-head h2 { margin-right: auto; font-size: 21px; }
.card-head .info { margin: 0 11px; }
.toggle { display: flex; align-items: center; gap: 11px; font-size: 18px; }
.toggle input { appearance: none; width: 31px; height: 21px; margin: 0; padding: 3px; border: 1px solid #e0e6e8; border-radius: 11px; background: #fff; }
.toggle input::before { content: ""; display: block; width: 13px; height: 13px; border-radius: 50%; background: #a9b4ba; }
.toggle input:checked { padding-left: 13px; }

.projects { padding: 19px 21px 14px; }
.projects h3 { font-size: 26px; line-height: 34px; margin-bottom: 18px; }
.phases { display: grid; grid-template-columns: repeat(3, 1fr); gap: 11px; }
.phases h4 { line-height: 22px; }
.phases p { font-size: 13px; line-height: 22px; margin-bottom: 4px; }

/* Sketch project card, also used enlarged */
.highlight { margin: 0 -7px 0 -11px; padding: 8px 4px 8px 8px; border: 3px solid #348862; background: #24434f; }
.sketch { color: #0c2c3a; }
.sketch .card-head { border-bottom: 1px solid #d9e0e4; }
.sketch .card-head .circle { background: #f3f7fa; }
.sketch-body { padding: 23px 21px 21px; }
.sketch h3 { font-size: 26px; line-height: 34px; margin-bottom: 13px; }
.sketch p { font-size: 15px; line-height: 23px; margin-bottom: 22px; white-space: nowrap; }
.tiles { display: grid; grid-template-columns: repeat(3, 1fr); gap: 11px; }
.tile { padding: 9px 10px 10px; border-radius: 5px; }
.tile.kv { background: #e7eef2; color: #124055; }
.tile.lav { background: #eeebe5; color: #5f4300; }
.tile.skov { background: #eaf4f1; color: #00391f; }
.tile-head { display: flex; align-items: center; gap: 11px; margin-bottom: 9px; }
.tile .circle { width: 31px; height: 31px; background: #fff; color: #0c2c3a; font-size: 18px; font-weight: bold; }
.tile .circle svg { width: 16px; height: 16px; }
.tile strong { display: block; font-size: 18px; line-height: 22px; margin-bottom: 6px; }
.tile .track { height: 12px; background: #fff; }
.sketch .orange { background: #fb8209; }
.sketch .brown { background: #8b3b0e; }
.sketch .blue { background: #006a8a; }
.sketch .green { background: #003c22; }

/* Lists */
.lists { display: grid; grid-template-columns: 1fr 1fr; gap: 11px; }
.lists .card { border-radius: 10px 10px 0 0; }
.list-body { display: flex; height: 203px; overflow: hidden; }
.list { flex: 1; padding: 22px 21px; }
.list a { display: flex; justify-content: space-between; align-items: center; height: 72px; margin-bottom: 11px; padding: 0 23px; border-radius: 5px; background: #fbfcfe; font-size: 18px; font-weight: bold; }
.list svg { width: 19px; height: 17px; }
.list-body .scrollbar { width: 10px; }

/* Callout */
.callout { position: relative; width: 81.4%; margin: 52px auto 0; padding: 13px 8px 13px 14px; border: 3px solid #348862; background: #24434f; }
.leader { position: absolute; left: 50%; bottom: 100%; width: 29.5%; height: 361px; overflow: visible; }
.leader path { fill: none; stroke: #000; stroke-width: 3; vector-effect: non-scaling-stroke; }
.large { border-radius: 17px; }
.large .card-head { height: 140px; padding: 0 35px; gap: 17px; border-bottom-width: 2px; }
.large .card-head .circle { width: 69px; height: 69px; }
.large .card-head .circle svg { width: 38px; height: 38px; }
.large .card-head h2 { font-size: 35px; }
.large .card-head .info { margin: 0 18px; }
.large .info svg { width: 31px; height: 31px; }
.large .sketch-body { padding: 40px 35px 35px; }
.large h3 { font-size: 44px; line-height: 56px; margin-bottom: 20px; }
.large p { font-size: 26px; line-height: 39px; margin-bottom: 34px; }
.large .tiles { gap: 18px; }
.large .tile { padding: 16px 17px; border-radius: 8px; font-size: 26px; }
.large .tile-head { gap: 17px; margin-bottom: 15px; }
.large .tile .circle { width: 52px; height: 52px; font-size: 30px; }
.large .tile .circle svg { width: 28px; height: 28px; }
.large .tile strong { font-size: 30px; line-height: 36px; margin-bottom: 10px; }
.large .track { height: 20px; gap: 8px; padding: 0 3px 0 8px; border-radius: 10px; }
.large .track i { height: 18px; border-radius: 9px; }
.large .track .dot { width: 18px; }
```
